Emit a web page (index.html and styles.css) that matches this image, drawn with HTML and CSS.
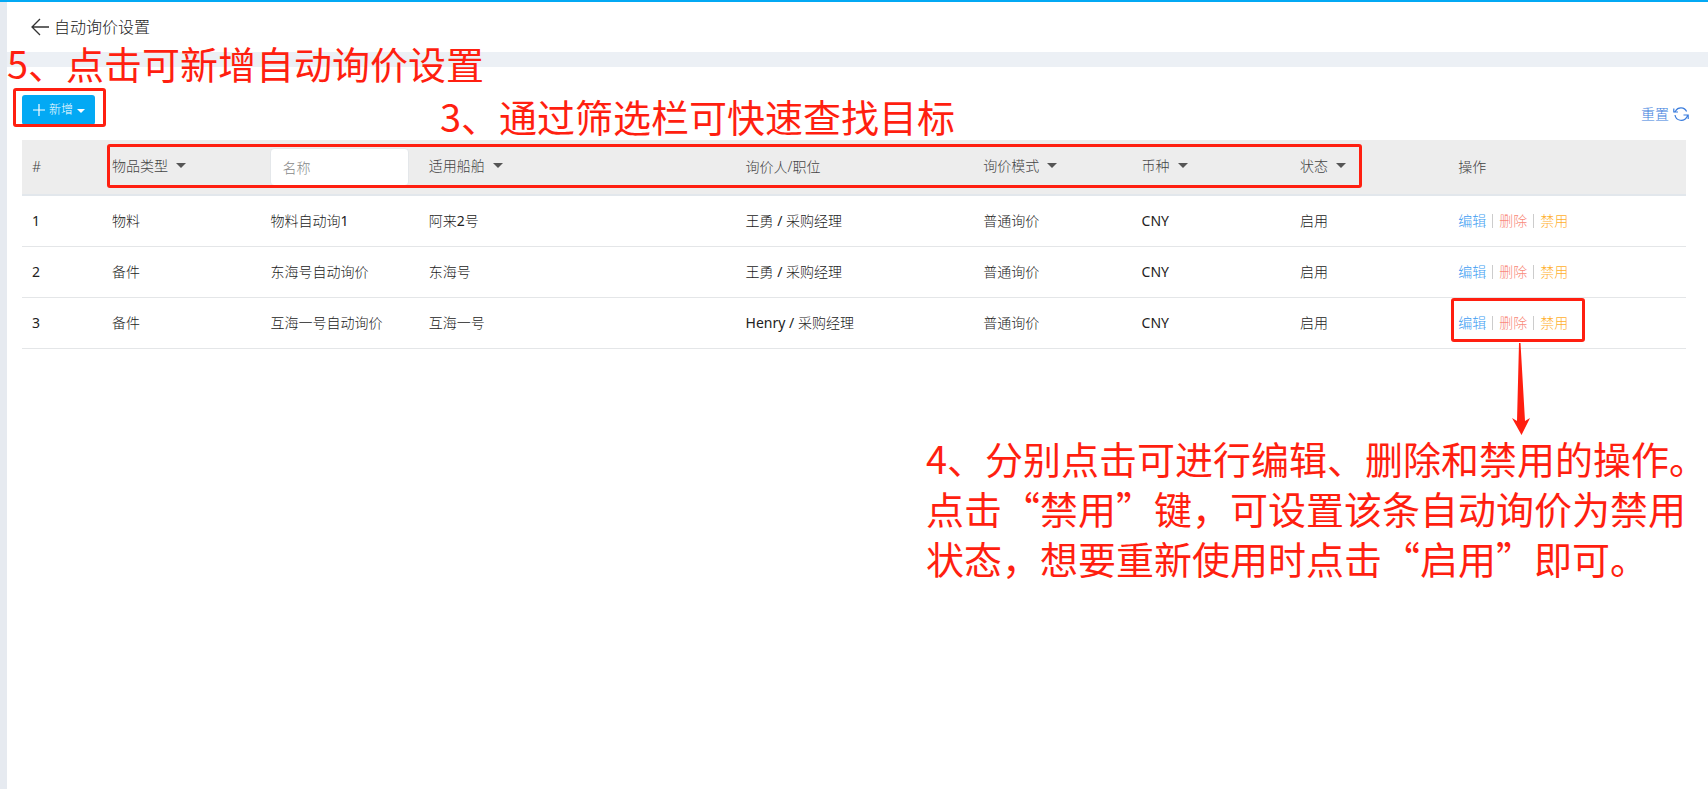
FILE: index.html
```html
<!DOCTYPE html>
<html lang="zh-CN">
<head>
<meta charset="utf-8">
<title>自动询价设置</title>
<link rel="stylesheet" href="styles.css">
</head>
<body>
<div class="page">
  <header class="topbar">
    <button class="back" type="button" aria-label="返回">
      <svg width="18" height="18" viewBox="0 0 18 18" fill="none" stroke="currentColor" stroke-width="1.3"><path d="M9 1 1 9l8 8M1 9h17"/></svg>
    </button>
    <h1 class="title">自动询价设置</h1>
  </header>
  <main class="panel">
    <div class="toolbar">
      <button class="add" type="button">
        <svg width="12" height="12" viewBox="0 0 12 12" stroke="currentColor" stroke-width="1.2"><path d="M6 0v12M0 6h12"/></svg>
        <span>新增</span>
        <i class="caret caret-small"></i>
      </button>
      <a class="reset" href="#">重置
        <svg width="16" height="14" viewBox="0 0 16 14" fill="none" stroke="currentColor" stroke-width="1.2"><path d="M.8 1.500V5h4.200M1.500 5.500l1-1.500A6.300 6.300 0 0 1 13.600 4.500M15.200 12V8h-4.700M14.800 8l-1 2A6.300 6.300 0 0 1 2 8"/></svg>
      </a>
    </div>
    <table class="grid">
      <colgroup>
        <col class="c-num"><col class="c-1"><col class="c-1"><col class="c-2"><col class="c-15"><col class="c-1"><col class="c-1"><col class="c-1"><col class="c-15">
      </colgroup>
      <thead>
        <tr>
          <th>#</th>
          <th><button class="filter" type="button">物品类型<i class="caret"></i></button></th>
          <th><input class="name" type="text" placeholder="名称" aria-label="名称"></th>
          <th><button class="filter" type="button">适用船舶<i class="caret"></i></button></th>
          <th>询价人/职位</th>
          <th><button class="filter" type="button">询价模式<i class="caret"></i></button></th>
          <th><button class="filter" type="button">币种<i class="caret"></i></button></th>
          <th><button class="filter" type="button">状态<i class="caret"></i></button></th>
          <th>操作</th>
        </tr>
      </thead>
      <tbody>
        <tr>
          <td>1</td><td>物料</td><td>物料自动询1</td><td>阿来2号</td><td>王勇 / 采购经理</td><td>普通询价</td><td>CNY</td><td>启用</td>
          <td><div class="actions"><a class="edit" href="#">编辑</a><a class="del" href="#">删除</a><a class="off" href="#">禁用</a></div></td>
        </tr>
        <tr>
          <td>2</td><td>备件</td><td>东海号自动询价</td><td>东海号</td><td>王勇 / 采购经理</td><td>普通询价</td><td>CNY</td><td>启用</td>
          <td><div class="actions"><a class="edit" href="#">编辑</a><a class="del" href="#">删除</a><a class="off" href="#">禁用</a></div></td>
        </tr>
        <tr>
          <td>3</td><td>备件</td><td>互海一号自动询价</td><td>互海一号</td><td>Henry / 采购经理</td><td>普通询价</td><td>CNY</td><td>启用</td>
          <td><div class="actions"><a class="edit" href="#">编辑</a><a class="del" href="#">删除</a><a class="off" href="#">禁用</a></div></td>
        </tr>
      </tbody>
    </table>
  </main>

  <div class="mark mark-add"></div>
  <div class="mark mark-filter"></div>
  <div class="mark mark-actions"></div>
  <svg class="pointer" width="18" height="92" viewBox="0 0 18 92" fill="currentColor"><path d="M7 0h1.500L13 78l5-3-8.500 17L0 75l5 3z"/></svg>
  <p class="note note-add">5、点击可新增自动询价设置</p>
  <p class="note note-filter">3、通过筛选栏可快速查找目标</p>
  <p class="note note-actions">4、分别点击可进行编辑、删除和禁用的操作。<br>点击“禁用”键，可设置该条自动询价为禁用<br>状态，想要重新使用时点击“启用”即可。</p>
</div>
</body>
</html>
```

FILE: styles.css
```css
* { box-sizing: border-box; }
body {
  margin: 0;
  background: #fff;
  color: #222;
  font: 400 14px/20px "Noto Sans", "Noto Sans CJK SC Light", "Noto Sans CJK SC", sans-serif;
}
button, input { font: inherit; color: inherit; }
button { border: 0; padding: 0; background: none; cursor: pointer; }
a { text-decoration: none; }
.page {
  position: relative;
  min-height: 100vh;
  border-top: 2px solid #03a9f4;
  overflow: hidden;
}
.page::before {
  content: "";
  position: absolute;
  inset: 0 auto 0 0;
  width: 7px;
  background: #e6eaf0;
}
.topbar {
  display: flex;
  align-items: center;
  gap: 5px;
  height: 50px;
  padding-left: 31px;
}
.back { display: flex; color: #333; }
.title { margin: 0; font-size: 16px; font-weight: 300; line-height: 24px; color: #222; }
.panel {
  border-top: 15px solid #ecf0f5;
  padding: 28px 22px 0;
}
.toolbar {
  display: flex;
  justify-content: space-between;
  align-items: flex-start;
  height: 45px;
}
.add {
  display: flex;
  align-items: center;
  gap: 4px;
  height: 30px;
  padding: 0 10px 0 11px;
  border-radius: 3px;
  background: #03a9f4;
  color: #fff;
  font-size: 12px;
}
.caret {
  display: inline-block;
  border: 5px solid transparent;
  border-top-color: #555;
  border-bottom: 0;
}
.caret-small { border-width: 4px 4px 0; border-top-color: #fff; margin-top: 2px; }
.reset {
  display: flex;
  align-items: center;
  gap: 4px;
  margin: 9px -3px 0 0;
  color: #3b7ddd;
  font-weight: 300;
}
.grid { width: 100%; table-layout: fixed; border-collapse: separate; border-spacing: 0; }
.c-num { width: 80px; }
.c-1 { width: 9.52%; }
.c-15 { width: 14.28%; }
.c-2 { width: 19.04%; }
th, td { padding: 0 10px; text-align: left; }
th {
  height: 56px;
  background: #ededed;
  border-bottom: 2px solid #e2e7ec;
  font-weight: 300;
  color: #444;
}
td { height: 51px; border-bottom: 1px solid #e4e6e8; }
.filter { display: flex; align-items: center; gap: 8px; padding-bottom: 3px; }
.name {
  display: block;
  width: 100%;
  height: 38px;
  padding: 0 11px;
  border: 1px solid #e4e7ea;
  border-radius: 4px;
  background: #fff;
}
.name::placeholder { color: #888; opacity: 1; }
.actions { display: flex; align-items: center; font-weight: 300; }
.actions a { line-height: 14px; }
.actions a + a { margin-left: 6px; padding-left: 6px; border-left: 1px solid #ccc; }
.edit { color: #3c9cf2; }
.del { color: #f98a7a; }
.off { color: #ffb02e; }

.mark { position: absolute; border: 3px solid #ff1f10; border-radius: 3px; pointer-events: none; }
.mark-add { left: 13px; top: 86px; width: 93px; height: 39px; }
.mark-filter { left: 107px; top: 142px; right: 346px; height: 44px; }
.mark-actions { right: 123px; top: 296px; width: 134px; height: 44px; }
.pointer { position: absolute; right: 178px; top: 341px; color: #ff1f10; }
.note {
  position: absolute;
  margin: 0;
  color: #ff1f10;
  font: 400 38px/50px "Noto Sans CJK SC", sans-serif;
  white-space: nowrap;
}
.note-add { left: 7px; top: 36px; }
.note-filter { left: 440px; top: 89px; }
.note-actions { right: 1px; top: 431px; }
```
